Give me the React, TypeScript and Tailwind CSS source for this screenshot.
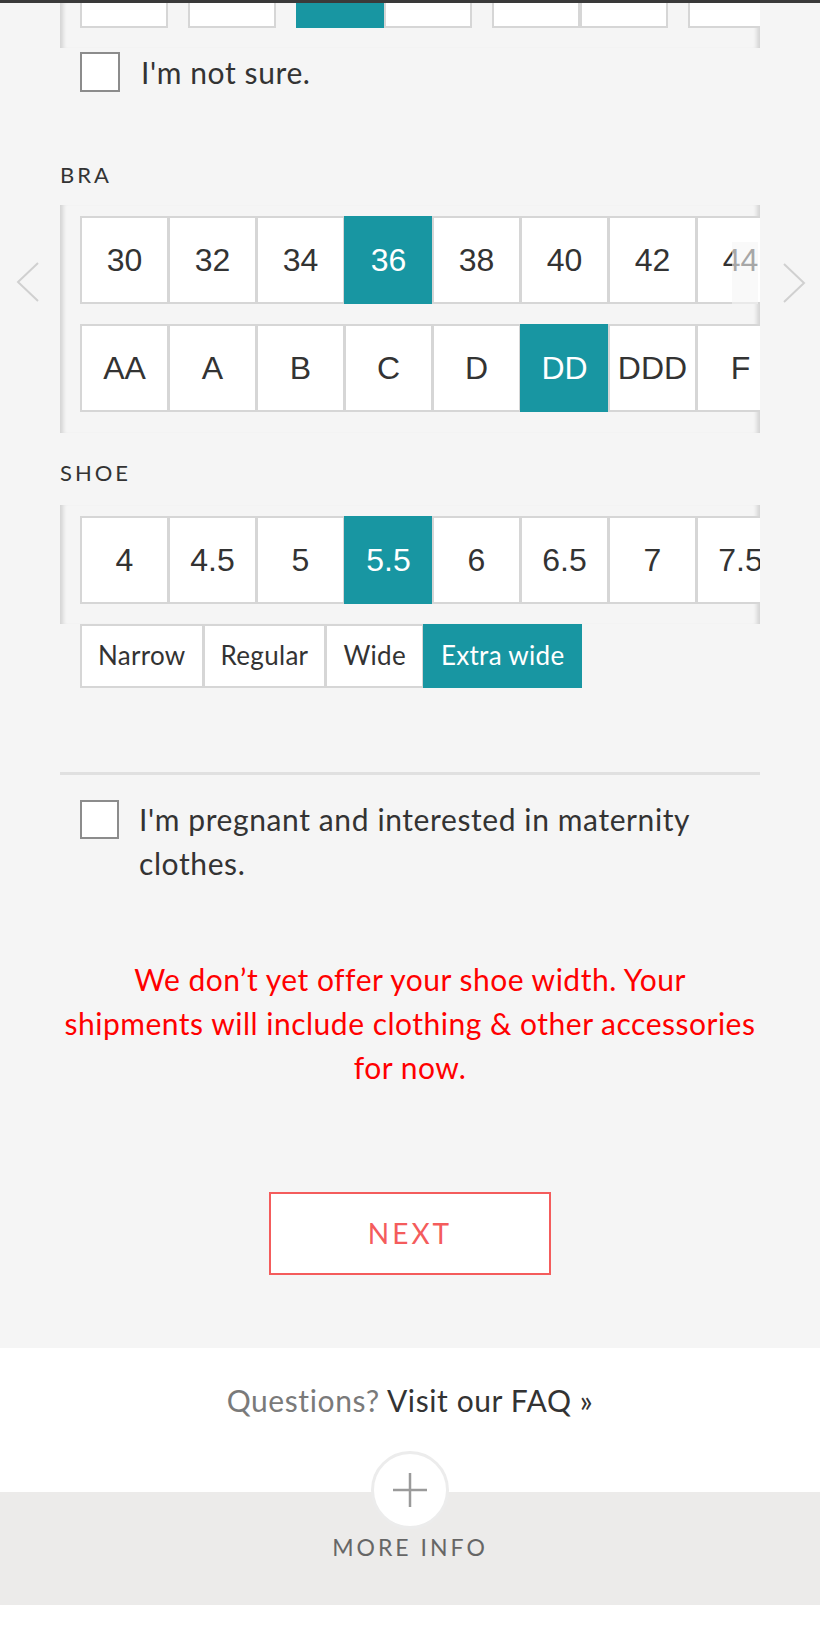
const edgeShadow =
  "shadow-[inset_6px_0_4px_-3px_rgba(0,0,0,0.14),inset_-6px_0_4px_-3px_rgba(0,0,0,0.14)]";

const topRow = [
  { ml: "ml-0", on: false },
  { ml: "ml-[20px]", on: false },
  { ml: "ml-[20px]", on: true },
  { ml: "ml-0", on: false },
  { ml: "ml-[20px]", on: false },
  { ml: "ml-0", on: false },
  { ml: "ml-[20px]", on: false },
];

const bands = ["30", "32", "34", "36", "38", "40", "42", "44"];
const cups = ["AA", "A", "B", "C", "D", "DD", "DDD", "F"];
const shoes = ["4", "4.5", "5", "5.5", "6", "6.5", "7", "7.5"];
const widths = ["Narrow", "Regular", "Wide", "Extra wide"];

function SizeBox({ label, selected }: { label: string; selected: boolean }) {
  return (
    <div
      className={`-ml-[1px] flex h-[88px] w-[89px] shrink-0 items-center justify-center border-2 font-['Liberation_Sans',Arial,sans-serif] text-[32px] first:ml-0 ${
        selected
          ? "border-[#1896a2] bg-[#1896a2] text-white"
          : "border-[#d6d6d6] bg-white text-[#333]"
      }`}
    >
      {label}
    </div>
  );
}

function Chevron({ dir }: { dir: "left" | "right" }) {
  return (
    <svg width="24" height="40" viewBox="0 0 24 40" fill="none">
      <polyline
        points={dir === "left" ? "22,1 2,20 22,39" : "2,1 22,20 2,39"}
        stroke="#d0d0d0"
        strokeWidth="2"
      />
    </svg>
  );
}

function Checkbox({ size }: { size: string }) {
  return <span className={`${size} shrink-0 border-2 border-[#8c8c8c] bg-white`} />;
}

export default function App() {
  return (
    <div className="min-h-[1646px] bg-white font-['Lato','Open_Sans',sans-serif] text-[#333]">
      <div className="h-[3px] bg-[#3a3a3a]" />

      <div className="bg-[#f5f5f5] px-[60px] pb-[73px]">
        {/* previous picker, scrolled mostly out of view */}
        <div className={`overflow-hidden pb-[20px] pl-[20px] ${edgeShadow}`}>
          <div className="flex">
            {topRow.map((b, i) => (
              <div
                key={i}
                className={`${b.ml} h-[25px] w-[88px] shrink-0 ${
                  b.on ? "bg-[#1896a2]" : "border-x-2 border-b-2 border-[#d6d6d6] bg-white"
                }`}
              />
            ))}
          </div>
        </div>

        <label className="mt-[4px] flex items-center gap-[21px] pl-[20px]">
          <Checkbox size="h-[40px] w-[40px]" />
          <span className="text-[30px] leading-[1.2] tracking-[0.6px]">I'm not sure.</span>
        </label>

        {/* Bra */}
        <h3 className="mt-[70px] text-[22px] leading-[1.2] tracking-[3px]">BRA</h3>
        <div className="relative mt-[17px]">
          <div className={`relative overflow-hidden pb-[21px] pl-[20px] pt-[11px] ${edgeShadow}`}>
            <div className="flex">
              {bands.map((s) => (
                <SizeBox key={s} label={s} selected={s === "36"} />
              ))}
            </div>
            <div className="mt-[20px] flex">
              {cups.map((s) => (
                <SizeBox key={s} label={s} selected={s === "DD"} />
              ))}
            </div>
            <div className="absolute right-[2px] top-[37px] h-[62px] w-[26px] bg-[#f5f5f5]/60" />
          </div>
          <div className="absolute left-[-44px] top-[57px]">
            <Chevron dir="left" />
          </div>
          <div className="absolute left-[722px] top-[58px]">
            <Chevron dir="right" />
          </div>
        </div>

        {/* Shoe */}
        <h3 className="mt-[27px] text-[22px] leading-[1.2] tracking-[3px]">SHOE</h3>
        <div className={`mt-[18px] overflow-hidden pb-[20px] pl-[20px] pt-[11px] ${edgeShadow}`}>
          <div className="flex">
            {shoes.map((s) => (
              <SizeBox key={s} label={s} selected={s === "5.5"} />
            ))}
          </div>
        </div>
        <div className="flex pl-[20px]">
          {widths.map((w) => (
            <div
              key={w}
              className={`-ml-[1px] flex h-[64px] items-center border-2 px-[16px] text-[26px] tracking-[0.3px] first:ml-0 ${
                w === "Extra wide"
                  ? "border-[#1896a2] bg-[#1896a2] text-white"
                  : "border-[#d6d6d6] bg-white text-[#333]"
              }`}
            >
              {w}
            </div>
          ))}
        </div>

        <div className="mt-[84px] h-[3px] bg-[#e0e0e0]" />

        <label className="mt-[22px] flex items-start gap-[20px] pl-[20px]">
          <span className="mt-[3px] flex">
            <Checkbox size="h-[39px] w-[39px]" />
          </span>
          <span className="text-[30px] leading-[44px] tracking-[0.6px]">
            I'm pregnant and interested in maternity clothes.
          </span>
        </label>

        <p className="-mx-[10px] mt-[72px] text-center text-[30px] leading-[44px] tracking-[0.5px] text-[#ff0000]">
          We don’t yet offer your shoe width. Your
          <br />
          shipments will include clothing &amp; other accessories
          <br />
          for now.
        </p>

        <button className="mx-auto mt-[103px] flex h-[83px] w-[282px] items-center justify-center border-2 border-[#f45c5c] bg-white text-[28px] tracking-[3px] text-[#f45c5c]">
          NEXT
        </button>
      </div>

      <div className="h-[144px] pt-[34px] text-center text-[30px] leading-[1.2] tracking-[0.6px]">
        <span className="text-[#7a7a7a]">Questions?</span>{" "}
        <a className="text-[#333]">Visit our FAQ »</a>
      </div>

      <div className="flex h-[113px] flex-col items-center bg-[#ecebea]">
        <div className="-mt-[41px] flex h-[78px] w-[78px] items-center justify-center rounded-full border-[3px] border-[#ececec] bg-white">
          <svg width="34" height="34" viewBox="0 0 34 34">
            <path d="M17 0v34M0 17h34" stroke="#9a9a9a" strokeWidth="2.5" />
          </svg>
        </div>
        <div className="mt-[5px] text-[23px] leading-[1.2] tracking-[3px] text-[#666]">
          MORE INFO
        </div>
      </div>
    </div>
  );
}
